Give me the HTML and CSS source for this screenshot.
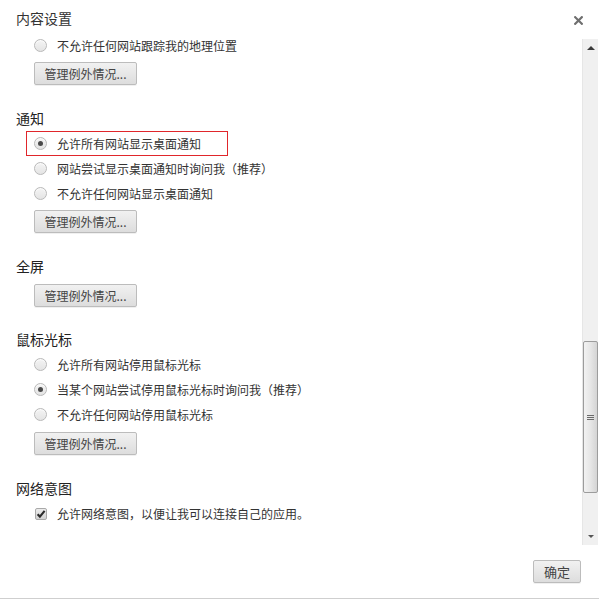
FILE: index.html
```html
<!DOCTYPE html>
<html lang="zh-CN">
<head>
<meta charset="utf-8">
<title>内容设置</title>
<link rel="stylesheet" href="styles.css">
</head>
<body>
<div class="dialog">
  <div class="header">
    <span class="title">内容设置</span>
    <svg class="close" width="9" height="9" viewBox="0 0 9 9"><path d="M1.2 1.2 L7.8 7.8 M7.8 1.2 L1.2 7.8" stroke="#6f6f6f" stroke-width="2.2" stroke-linecap="square"/></svg>
  </div>
  <div class="main">
    <div class="content">
      <div class="section first">
        <div class="row top-row"><span class="radio"></span><span class="label">不允许任何网站跟踪我的地理位置</span></div>
        <div class="btn-row"><button class="btn">管理例外情况...</button></div>
      </div>

      <div class="section">
        <div class="heading">通知</div>
        <div class="row highlight"><span class="radio checked"></span><span class="label">允许所有网站显示桌面通知</span></div>
        <div class="row"><span class="radio"></span><span class="label">网站尝试显示桌面通知时询问我（推荐）</span></div>
        <div class="row"><span class="radio"></span><span class="label">不允许任何网站显示桌面通知</span></div>
        <div class="btn-row"><button class="btn">管理例外情况...</button></div>
      </div>

      <div class="section">
        <div class="heading">全屏</div>
        <div class="btn-row solo"><button class="btn">管理例外情况...</button></div>
      </div>

      <div class="section after-solo">
        <div class="heading">鼠标光标</div>
        <div class="row"><span class="radio"></span><span class="label">允许所有网站停用鼠标光标</span></div>
        <div class="row"><span class="radio checked"></span><span class="label">当某个网站尝试停用鼠标光标时询问我（推荐）</span></div>
        <div class="row"><span class="radio"></span><span class="label">不允许任何网站停用鼠标光标</span></div>
        <div class="btn-row late"><button class="btn">管理例外情况...</button></div>
      </div>

      <div class="section">
        <div class="heading">网络意图</div>
        <div class="row"><span class="checkbox"><svg width="12" height="12" viewBox="0 0 12 12"><path d="M2.6 6.2 L4.9 8.6 L9.6 2.8" fill="none" stroke="#2b2b2b" stroke-width="2.1"/></svg></span><span class="label">允许网络意图，以便让我可以连接自己的应用。</span></div>
      </div>
    </div>
    <div class="scrollbar">
      <div class="sb-arrow"><span class="tri-up"></span></div>
      <div class="sb-gap"></div>
      <div class="thumb"><span class="grip"></span><span class="grip"></span><span class="grip"></span></div>
      <div class="sb-fill"></div>
      <div class="sb-arrow"><span class="tri-down"></span></div>
    </div>
  </div>
  <div class="footer">
    <button class="btn ok">确定</button>
  </div>
</div>
</body>
</html>
```
FILE: styles.css
```css
* { box-sizing: border-box; }
html, body { margin: 0; padding: 0; background: #fff; }
body {
  font-family: "Noto Sans CJK SC", "Noto Sans", "Liberation Sans", sans-serif;
  color: #333;
}
.dialog {
  width: 599px;
  height: 599px;
  display: flex;
  flex-direction: column;
  border-bottom: 1px solid #cfcfcf;
}
.header {
  height: 39px;
  flex: none;
  display: flex;
  align-items: center;
  justify-content: space-between;
  padding: 0 16px 0 16px;
}
.title {
  font-size: 14px;
  line-height: 20px;
  color: #333;
  margin-top: -3px;
}
.close { margin-top: 1px; }
.main {
  height: 506px;
  flex: none;
  display: flex;
}
.content {
  flex: 1;
}
.section { margin-top: 23px; }
.section.first { margin-top: 0; }
.section.after-solo { margin-top: 22px; }
.heading {
  height: 20px;
  line-height: 20px;
  font-size: 14px;
  color: #222;
  padding-left: 16px;
  margin-bottom: 3px;
}
.row {
  height: 25px;
  display: flex;
  align-items: center;
  padding-left: 34px;
  font-size: 12px;
  color: #333;
}
.row.top-row {
  height: 19px;
  align-items: flex-start;
}
.top-row .label { line-height: 16px; margin-top: -1.5px; }
.row.highlight {
  width: 202px;
  margin-left: 26px;
  padding-left: 7px;
  border: 1px solid #e0262b;
}
.label { line-height: 16px; }
.radio {
  width: 13px;
  height: 13px;
  border-radius: 50%;
  border: 1px solid #b9b9b9;
  background: linear-gradient(#f4f4f4, #e4e4e4);
  box-shadow: inset 0 1px 1px rgba(255,255,255,0.8);
  margin-right: 10px;
  flex: none;
  display: flex;
  align-items: center;
  justify-content: center;
}
.radio.checked::after {
  content: "";
  width: 5px;
  height: 5px;
  border-radius: 50%;
  background: #4a4a4a;
}
.checkbox {
  width: 12px;
  height: 12px;
  border: 1px solid #a9a9a9;
  border-radius: 2px;
  background: linear-gradient(#ececec, #d2d2d2);
  margin-left: 1px;
  margin-right: 10px;
  flex: none;
  display: flex;
  align-items: center;
  justify-content: center;
  position: relative;
}
.checkbox svg { position: absolute; left: -1px; top: -1px; }
.btn-row {
  padding-left: 34px;
  margin-top: 4px;
  display: flex;
}
.btn-row.solo { margin-top: 8px; }
.btn-row.late { margin-top: 5px; }
.btn {
  height: 23px;
  padding: 0 0;
  width: 103px;
  font-family: inherit;
  font-size: 12px;
  line-height: 21px;
  color: #444;
  border: 1px solid #bcbcbc;
  border-radius: 2px;
  background: linear-gradient(#f1f1f1, #e9e9e9 40%, #dddddd);
  box-shadow: 0 1px 0 rgba(0,0,0,0.06);
  margin: 0;
}
.scrollbar {
  width: 16px;
  margin-right: 1px;
  flex: none;
  background: #f0f0f0;
  border-left: 1px solid #e6e6e6;
  display: flex;
  flex-direction: column;
}
.sb-arrow {
  height: 17px;
  flex: none;
  display: flex;
  align-items: center;
  justify-content: center;
}
.tri-up {
  width: 0; height: 0;
  border-left: 4px solid transparent;
  border-right: 4px solid transparent;
  border-bottom: 4px solid #3a3a3a;
}
.tri-down {
  width: 0; height: 0;
  border-left: 3px solid transparent;
  border-right: 3px solid transparent;
  border-top: 3px solid #555;
}
.sb-gap { height: 285px; flex: none; }
.thumb {
  height: 152px;
  flex: none;
  border: 1px solid #9c9c9c;
  border-radius: 2px;
  background: linear-gradient(90deg, #f2f2f2, #e6e6e6 50%, #d4d4d4);
  display: flex;
  flex-direction: column;
  align-items: center;
  justify-content: center;
  gap: 1px;
}
.grip {
  width: 7px;
  height: 1px;
  background: #6a6a6a;
}
.sb-fill { flex: 1; }
.footer {
  flex: 1;
  display: flex;
  justify-content: flex-end;
  align-items: flex-start;
  padding: 15px 18px 0 0;
}
.btn.ok {
  width: 48px;
  font-size: 13px;
}
```
